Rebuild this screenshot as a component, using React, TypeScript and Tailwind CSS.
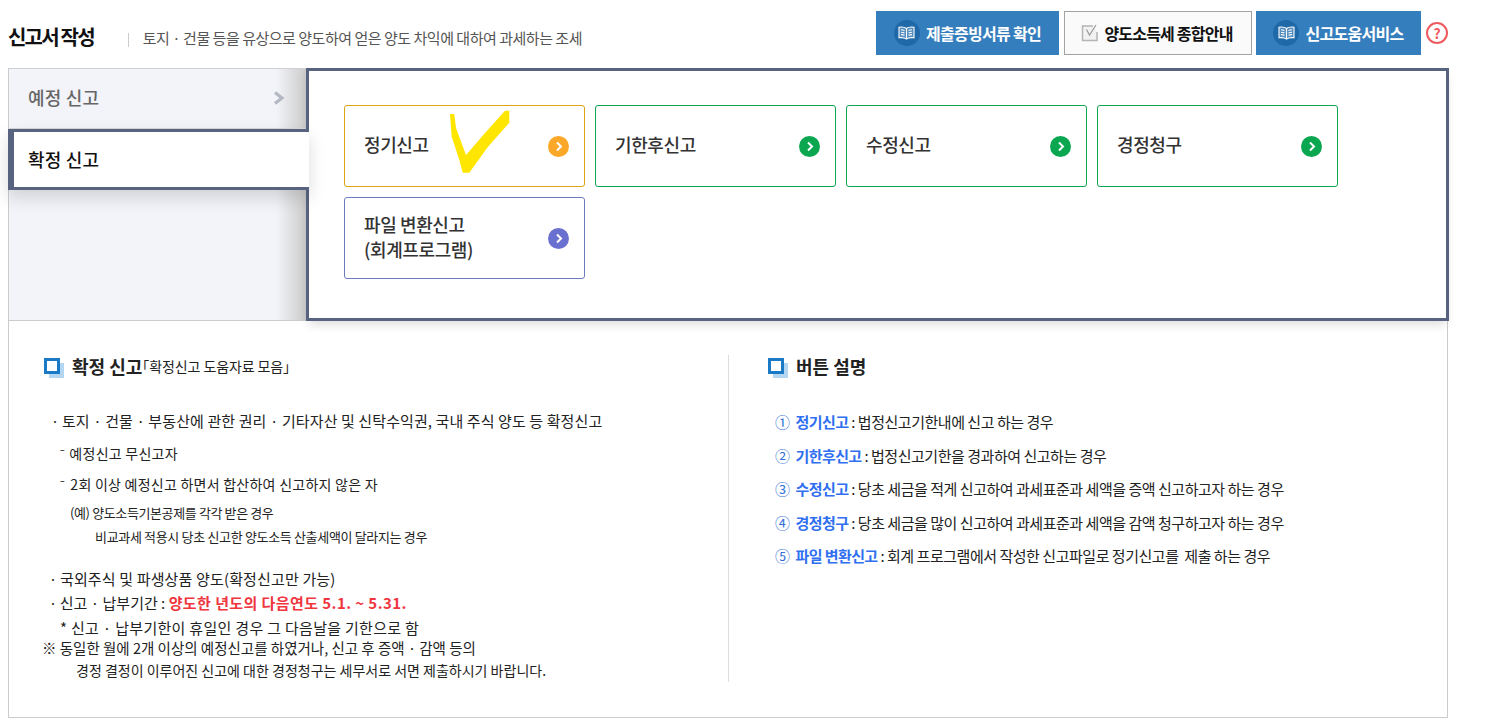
import React from 'react';

const font = { fontFamily: '"Noto Sans CJK KR", "Noto Sans", sans-serif' };

function BookIcon() {
    return (
        <span className="flex h-[26px] w-[26px] shrink-0 items-center justify-center rounded-full bg-[#1f69a8]">
            <svg width="17" height="14" viewBox="0 0 17 14" fill="none" stroke="#ffffff" strokeWidth="1.100">
                <path d="M8.500 2.500C7 1.200 4 .8 1 1.200v10.600c3-.4 6 0 7.500 1.300 1.500-1.300 4.500-1.700 7.500-1.300V1.200C13 .8 10 1.200 8.500 2.500z" fill="#cfe2f3" fillOpacity="0.3" />
                <path d="M8.500 2.500v10.600M3 3.800c1.200 0 2.400.2 3.500.7M3 6.200c1.200 0 2.400.2 3.500.7M3 8.600c1.200 0 2.400.2 3.500.7M14 3.800c-1.200 0-2.400.2-3.500.7M14 6.200c-1.200 0-2.400.2-3.500.7M14 8.600c-1.200 0-2.400.2-3.500.7" />
            </svg>
        </span>
    );
}

function CheckIcon() {
    return (
        <svg width="18" height="18" viewBox="0 0 18 18" fill="none" className="shrink-0">
            <path d="M12 2H1.500v14.500H16V8" stroke="#b5b5b5" strokeWidth="1.500" fill="#f2f2f2" />
            <path d="M5.500 5.500l3 5.500 6.500-10" stroke="#9a9a9a" strokeWidth="1.200" />
        </svg>
    );
}

function ArrowDot({ color }: { color: string }) {
    return (
        <span className={`flex h-[21px] w-[21px] shrink-0 items-center justify-center rounded-full ${color}`}>
            <svg width="8" height="11" viewBox="0 0 8 11" fill="none">
                <path d="M2 1.500l4 4-4 4" stroke="#ffffff" strokeWidth="2" />
            </svg>
        </span>
    );
}

function SquareBullet() {
    return (
        <span className="relative mt-[4px] block h-[20px] w-[20px] shrink-0">
            <span className="absolute left-[5px] top-[5px] h-[15px] w-[15px] bg-[#b3d7f3]" />
            <span className="absolute left-0 top-0 h-[16px] w-[16px] border-[3px] border-[#1b7ac6] bg-white" />
        </span>
    );
}

function CardButton({ border, dot, children }: { border: string; dot: string; children: React.ReactNode }) {
    return (
        <div className={`flex h-[82px] w-[241px] items-center justify-between rounded-[3px] border bg-white pl-[19px] pr-[15px] ${border}`}>
            <span className="pb-[3px] text-[18px] font-medium leading-[25px] tracking-[-0.4px] text-[#333333]">{children}</span>
            <ArrowDot color={dot} />
        </div>
    );
}

const buttonHelp = [
    ['①', '정기신고', ' : 법정신고기한내에 신고 하는 경우'],
    ['②', '기한후신고', ' : 법정신고기한을 경과하여 신고하는 경우'],
    ['③', '수정신고', ' : 당초 세금을 적게 신고하여 과세표준과 세액을 증액 신고하고자 하는 경우'],
    ['④', '경정청구', ' : 당초 세금을 많이 신고하여 과세표준과 세액을 감액 청구하고자 하는 경우'],
    ['⑤', '파일 변환신고', ' : 회계 프로그램에서 작성한 신고파일로 정기신고를  제출 하는 경우'],
];

export default function App() {
    return (
        <div className="w-[1490px] bg-white pb-[9px] pl-[8px] text-black" style={font}>
            {/* Header */}
            <div className="flex h-[68px] w-[1440px] items-start">
                <h1 className="mt-[22px] text-[20px] font-bold leading-[30px] tracking-[-1.8px] text-[#111111]">신고서 작성</h1>
                <span className="ml-[34px] mt-[33px] h-[14px] w-px bg-[#cccccc]" />
                <p className="ml-[14px] mt-[27px] text-[15px] leading-[22px] tracking-[-0.48px] text-[#555555]">
                    토지 · 건물 등을 유상으로 양도하여 얻은 양도 차익에 대하여 과세하는 조세
                </p>
                <div className="ml-auto mt-[11px] flex items-center">
                    <div className="flex h-[44px] w-[183px] items-center justify-center gap-[6px] bg-[#357ebd] text-[16px] font-bold tracking-[-0.7px] text-white">
                        <BookIcon />
                        제출증빙서류 확인
                    </div>
                    <div className="ml-[5px] flex h-[44px] w-[188px] items-center justify-center gap-[5px] border border-[#a3a3a3] bg-[#fafafa] pr-[2px] text-[16px] font-bold tracking-[-0.8px] text-[#111111]">
                        <CheckIcon />
                        양도소득세 종합안내
                    </div>
                    <div className="ml-[4px] flex h-[44px] w-[165px] items-center justify-center gap-[6px] bg-[#357ebd] text-[16px] font-bold tracking-[-0.7px] text-white">
                        <BookIcon />
                        신고도움서비스
                    </div>
                    <span className="ml-[5px] flex h-[22px] w-[22px] items-center justify-center rounded-full border-2 border-[#ef5a5f] text-[14px] font-bold leading-none text-[#ef5a5f]">?</span>
                </div>
            </div>

            {/* Tabs */}
            <div className="relative flex h-[253px] w-[1441px]">
                <div className="relative flex w-[298px] flex-col border-b border-l border-t border-b-[#cccccc] border-l-[#cccccc] border-t-[#cfcfd6] bg-[#f3f4f9]">
                    {/* shade thrown on the tab column by the open panel */}
                    <div className="pointer-events-none absolute inset-y-0 right-0 w-[30px] bg-gradient-to-l from-[#cbcbcb] to-transparent" />
                    <div className="relative flex h-[60px] items-center justify-between border-b border-[#d6d6dc] pb-[2px] pl-[19px] pr-[21px] text-[18px] font-medium tracking-[0.2px] text-[#666666]">
                        예정 신고
                        <svg width="12" height="14" viewBox="0 0 12 14" fill="none">
                            <path d="M2 1.500l7 5.500-7 5.500" stroke="#b4b8c2" strokeWidth="3.200" />
                        </svg>
                    </div>
                    <div className="relative z-30 -ml-px flex h-[61px] w-[301px] items-center border-y-[3px] border-l-[6px] border-y-[#58647f] border-l-[#58647f] bg-white pb-[1px] pl-[14px] text-[18px] font-medium tracking-[0.2px] text-[#111111] shadow-[0_8px_16px_rgba(0,0,0,0.14)]">
                        확정 신고
                    </div>
                </div>
                <div className="relative z-20 flex-1 border-[3px] border-[#58647f] bg-white pl-[35px] pt-[34px] shadow-[0_6px_10px_-3px_rgba(0,0,0,0.15)]">
                    <div className="flex flex-wrap gap-[10px]">
                        <CardButton border="border-[#dda312]" dot="bg-[#fba727]">정기신고</CardButton>
                        <CardButton border="border-[#0ba650]" dot="bg-[#0ba650]">기한후신고</CardButton>
                        <CardButton border="border-[#0ba650]" dot="bg-[#0ba650]">수정신고</CardButton>
                        <CardButton border="border-[#0ba650]" dot="bg-[#0ba650]">경정청구</CardButton>
                        <CardButton border="border-[#6d7bbf]" dot="bg-[#6a70d0]">
                            파일 변환신고<br />(회계프로그램)
                        </CardButton>
                    </div>
                    {/* hand-drawn check mark on the capture */}
                    <svg className="absolute left-[121px] top-[29px]" width="90" height="85" viewBox="0 0 90 85" fill="none">
                        <path d="M20 14L24.300 14L26 28L36 55L55 33L75 10.700L79.300 10.700L79.300 22.700L58 46.700L39.300 72.700L32.700 72.700L29.300 60L21.700 36.700Z" fill="#ffe600" />
                    </svg>
                </div>
            </div>

            {/* Description */}
            <div className="flex h-[397px] w-[1440px] border border-t-0 border-[#cccccc] bg-white pl-[36px] pt-[34px]">
                <div className="h-[327px] w-[684px] border-r border-[#dddddd] text-[14px] text-[#222222]">
                    <div className="-ml-px -mt-[2px] flex h-[26px] items-center gap-[8px]">
                        <SquareBullet />
                        <span className="text-[18px] font-bold tracking-[0px] text-[#222222]">확정 신고</span>
                        <span className="-ml-[15px] text-[14px] tracking-[-0.1px]">「확정신고 도움자료 모음」</span>
                    </div>
                    <p className="mt-[31px] pl-[3px] text-[15px] leading-[22px] tracking-[0.1px]">ㆍ토지 · 건물 · 부동산에 관한 권리 · 기타자산 및 신탁수익권, 국내 주식 양도 등 확정신고</p>
                    <p className="mt-[10px] pl-[15px] leading-[22px] tracking-[0.25px]"><span className="mr-[1px]">⁻</span> 예정신고 무신고자</p>
                    <p className="mt-[9px] pl-[15px] leading-[22px] tracking-[0.25px]"><span className="mr-[2px]">⁻</span> 2회 이상 예정신고 하면서 합산하여 신고하지 않은 자</p>
                    <p className="mt-[8px] pl-[25px] text-[13px] leading-[20px] tracking-[-0.38px]">(예) 양도소득기본공제를 각각 받은 경우</p>
                    <p className="mt-[4px] pl-[50px] text-[13px] leading-[20px] tracking-[-0.33px]">비교과세 적용시 당초 신고한 양도소득 산출세액이 달라지는 경우</p>
                    <p className="mt-[21px] pl-[1px] text-[15px] leading-[22px] tracking-[0.15px]">ㆍ국외주식 및 파생상품 양도(확정신고만 가능)</p>
                    <p className="mt-[2px] pl-[1px] text-[15px] leading-[22px]">
                        ㆍ신고 · 납부기간 : <span className="font-bold tracking-[0.42px] text-[#f0353f]">양도한 년도의 다음연도 5.1. ~ 5.31.</span>
                    </p>
                    <p className="mt-[3px] pl-[15px] text-[15px] leading-[22px] tracking-[0.3px]">* 신고 · 납부기한이 휴일인 경우 그 다음날을 기한으로 함</p>
                    <p className="-mt-[2px] -ml-[3px] text-[14.5px] leading-[22px]">※ 동일한 월에 2개 이상의 예정신고를 하였거나, 신고 후 증액 · 감액 등의</p>
                    <p className="ml-[31px] leading-[22px]">경정 결정이 이루어진 신고에 대한 경정청구는 세무서로 서면 제출하시기 바랍니다.</p>
                </div>
                <div className="pl-[39px] text-[15px] tracking-[-0.47px] text-[#222222]">
                    <div className="-mt-[2px] flex h-[26px] items-center gap-[8px]">
                        <SquareBullet />
                        <span className="text-[18px] font-bold tracking-[0px]">버튼 설명</span>
                    </div>
                    <ul className="mt-[32px] flex flex-col gap-[11.500px] pl-[7px]">
                        {buttonHelp.map(([num, name, text]) => (
                            <li key={num} className="whitespace-pre leading-[22px]">
                                <span className="mr-[6px] text-[#2f6fd8]">{num}</span>
                                <span className="font-bold tracking-[-0.6px] text-[#2f6ff0]">{name}</span>
                                {text}
                            </li>
                        ))}
                    </ul>
                </div>
            </div>
        </div>
    );
}
